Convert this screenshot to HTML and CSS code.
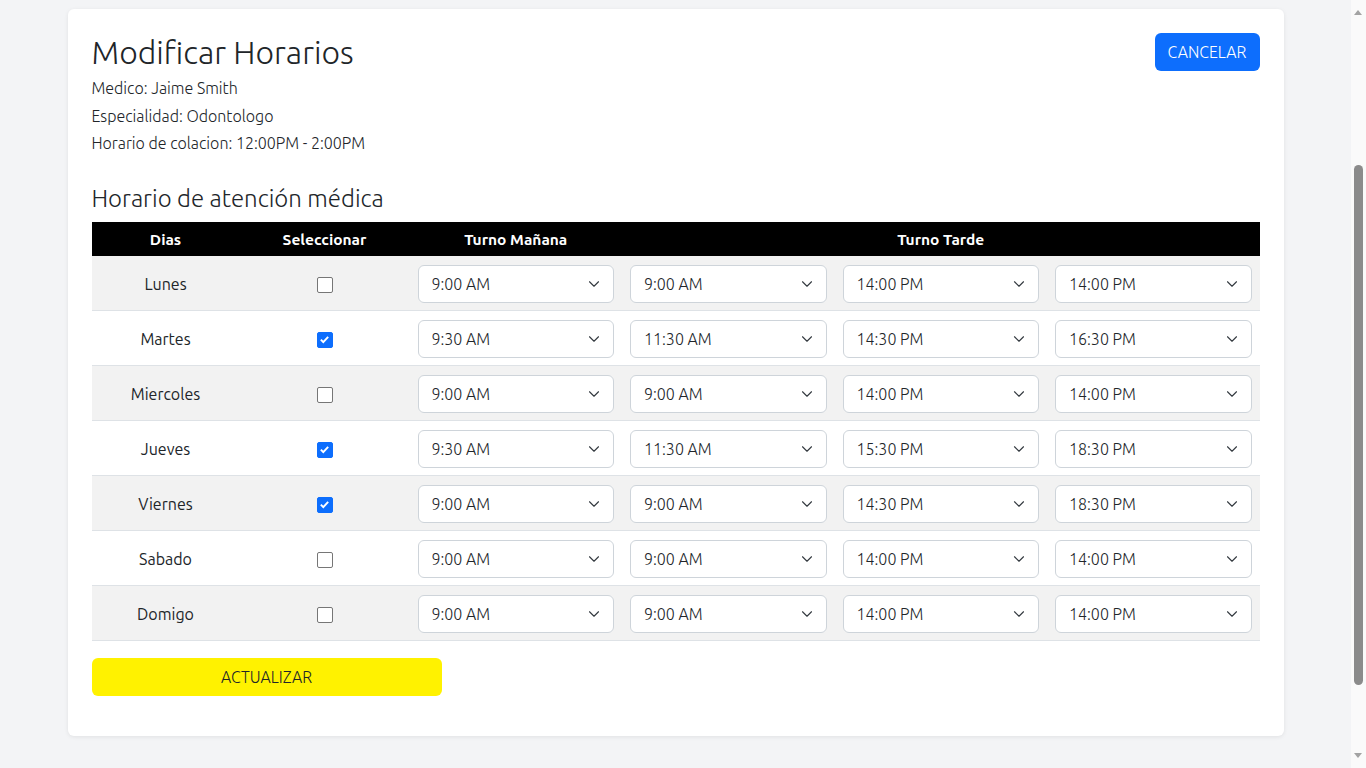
FILE: index.html
```html
<!DOCTYPE html>
<html lang="es">
<head>
<meta charset="utf-8">
<title>Modificar Horarios</title>
<link rel="stylesheet" href="styles.css">
</head>
<body>
<main class="page">
  <section class="card">
    <div class="card-head">
      <h1 class="title">Modificar Horarios</h1>
      <button class="btn btn-cancel" type="button">CANCELAR</button>
    </div>
    <div class="info">
      <p>Medico: Jaime Smith</p>
      <p>Especialidad: Odontologo</p>
      <p>Horario de colacion: 12:00PM - 2:00PM</p>
    </div>
    <h2 class="subtitle">Horario de atención médica</h2>
    <table class="schedule">
      <colgroup>
        <col class="c-day"><col class="c-sel"><col><col><col><col>
      </colgroup>
      <thead>
        <tr><th>Dias</th><th>Seleccionar</th><th>Turno Mañana</th><th colspan="3">Turno Tarde</th></tr>
      </thead>
      <tbody>
        <tr><td class="day">Lunes</td><td><input type="checkbox" class="chk"></td>
          <td><select class="sel"><option>9:00 AM</option></select></td>
          <td><select class="sel"><option>9:00 AM</option></select></td>
          <td><select class="sel"><option>14:00 PM</option></select></td>
          <td><select class="sel"><option>14:00 PM</option></select></td></tr>
        <tr><td class="day">Martes</td><td><input type="checkbox" class="chk" checked></td>
          <td><select class="sel"><option>9:30 AM</option></select></td>
          <td><select class="sel"><option>11:30 AM</option></select></td>
          <td><select class="sel"><option>14:30 PM</option></select></td>
          <td><select class="sel"><option>16:30 PM</option></select></td></tr>
        <tr><td class="day">Miercoles</td><td><input type="checkbox" class="chk"></td>
          <td><select class="sel"><option>9:00 AM</option></select></td>
          <td><select class="sel"><option>9:00 AM</option></select></td>
          <td><select class="sel"><option>14:00 PM</option></select></td>
          <td><select class="sel"><option>14:00 PM</option></select></td></tr>
        <tr><td class="day">Jueves</td><td><input type="checkbox" class="chk" checked></td>
          <td><select class="sel"><option>9:30 AM</option></select></td>
          <td><select class="sel"><option>11:30 AM</option></select></td>
          <td><select class="sel"><option>15:30 PM</option></select></td>
          <td><select class="sel"><option>18:30 PM</option></select></td></tr>
        <tr><td class="day">Viernes</td><td><input type="checkbox" class="chk" checked></td>
          <td><select class="sel"><option>9:00 AM</option></select></td>
          <td><select class="sel"><option>9:00 AM</option></select></td>
          <td><select class="sel"><option>14:30 PM</option></select></td>
          <td><select class="sel"><option>18:30 PM</option></select></td></tr>
        <tr><td class="day">Sabado</td><td><input type="checkbox" class="chk"></td>
          <td><select class="sel"><option>9:00 AM</option></select></td>
          <td><select class="sel"><option>9:00 AM</option></select></td>
          <td><select class="sel"><option>14:00 PM</option></select></td>
          <td><select class="sel"><option>14:00 PM</option></select></td></tr>
        <tr><td class="day">Domigo</td><td><input type="checkbox" class="chk"></td>
          <td><select class="sel"><option>9:00 AM</option></select></td>
          <td><select class="sel"><option>9:00 AM</option></select></td>
          <td><select class="sel"><option>14:00 PM</option></select></td>
          <td><select class="sel"><option>14:00 PM</option></select></td></tr>
      </tbody>
    </table>
    <button class="btn btn-update" type="button">ACTUALIZAR</button>
  </section>
</main>
<div class="scrollbar" aria-hidden="true">
  <span class="sb-arrow sb-up"></span>
  <span class="sb-thumb"></span>
  <span class="sb-arrow sb-down"></span>
</div>
</body>
</html>
```
FILE: styles.css
```css
html, body {
  height: 100%;
}
body {
  margin: 0;
  background: #f3f4f6;
  color: #212529;
  font-family: "Ubuntu", "Lato", "Noto Sans", sans-serif;
  font-size: 16px;
  overflow: hidden;
}
.page {
  padding: 9px 15px 32px 0;
}
.card {
  width: 1216px;
  margin: 0 auto;
  box-sizing: border-box;
  background: #fff;
  border-radius: 6px;
  box-shadow: 0 1px 4px rgba(0, 0, 0, 0.08);
  padding: 24px 24px 40px;
}
.card-head {
  display: flex;
  justify-content: space-between;
  align-items: flex-start;
}
.title {
  margin: 0;
  font-size: 32px;
  font-weight: 300;
  line-height: 38px;
}
.btn {
  font-family: inherit;
  font-size: 16px;
  font-weight: 300;
  border: 0;
  border-radius: 6px;
  height: 38px;
  padding: 0;
  cursor: pointer;
}
.btn-cancel {
  background: #0d6efd;
  color: #fff;
  width: 105px;
}
.info {
  margin-top: 4px;
}
.info p {
  margin: 0;
  line-height: 27.5px;
  font-weight: 300;
}
.subtitle {
  margin: 26px 0 9px;
  font-size: 24px;
  font-weight: 300;
  line-height: 29px;
}
.schedule {
  width: 100%;
  table-layout: fixed;
  border-collapse: collapse;
}
.c-day { width: 148px; }
.c-sel { width: 170px; }
.schedule th {
  background: #000;
  color: #fff;
  font-size: 15.5px;
  font-weight: 700;
  height: 32px;
  padding: 2px 8px 0;
  text-align: center;
}
.schedule td {
  height: 52px;
  padding: 2px 8px 0;
  border-bottom: 1px solid #dee2e6;
  text-align: center;
  vertical-align: middle;
}
.schedule tbody tr:nth-child(odd) td {
  background: #f2f2f2;
}
.day {
  font-weight: 400;
}
.chk {
  appearance: none;
  -webkit-appearance: none;
  width: 16px;
  height: 16px;
  margin: 0;
  border: 1px solid #767676;
  border-radius: 2px;
  background: #fff;
  vertical-align: middle;
}
.chk:checked {
  border-color: #0d6efd;
  background: #0d6efd url("data:image/svg+xml,%3csvg xmlns='http://www.w3.org/2000/svg' viewBox='0 0 16 16'%3e%3cpath fill='none' stroke='%23fff' stroke-width='2.4' d='M3.5 8.2l3 3 6-6.5'/%3e%3c/svg%3e") center / 13px 13px no-repeat;
}
.sel {
  appearance: none;
  -webkit-appearance: none;
  display: block;
  width: 100%;
  height: 38px;
  box-sizing: border-box;
  padding: 0 36px 0 13px;
  font-family: inherit;
  font-size: 16px;
  font-weight: 300;
  color: #212529;
  background: #fff url("data:image/svg+xml,%3csvg xmlns='http://www.w3.org/2000/svg' viewBox='0 0 16 16'%3e%3cpath fill='none' stroke='%23343a40' stroke-linecap='round' stroke-linejoin='round' stroke-width='1.5' d='m2 5 6 6 6-6'/%3e%3c/svg%3e") right 12px center / 14px 12px no-repeat;
  border: 1px solid #ced4da;
  border-radius: 6px;
}
.btn-update {
  display: block;
  margin-top: 17px;
  width: 350px;
  background: #fff200;
  color: #212529;
}

/* browser scrollbar as seen in the capture */
.scrollbar {
  position: fixed;
  top: 0;
  right: 0;
  width: 15px;
  height: 100%;
  background: #fafafa;
}
.sb-arrow {
  position: absolute;
  left: 3px;
  width: 0;
  height: 0;
  border-left: 4.5px solid transparent;
  border-right: 4.5px solid transparent;
}
.sb-up {
  top: 10px;
  border-bottom: 5px solid #a3a3a3;
}
.sb-down {
  bottom: 10px;
  border-top: 5px solid #a3a3a3;
}
.sb-thumb {
  position: absolute;
  left: 3px;
  top: 165px;
  width: 9px;
  height: 520px;
  border-radius: 4.5px;
  background: #8b8b8b;
}
```
